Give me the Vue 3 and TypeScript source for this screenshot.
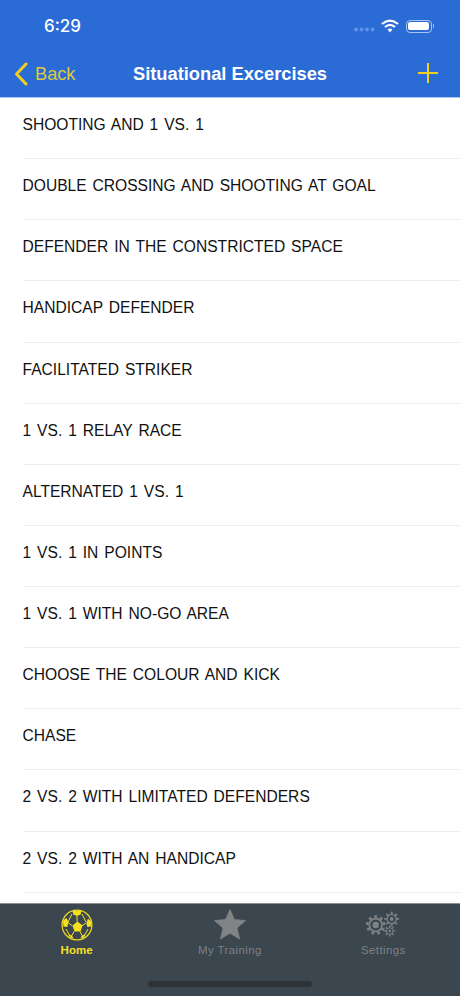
<script setup lang="ts">
const exercises: string[] = [
  'SHOOTING AND 1 VS. 1',
  'DOUBLE CROSSING AND SHOOTING AT GOAL',
  'DEFENDER IN THE CONSTRICTED SPACE',
  'HANDICAP DEFENDER',
  'FACILITATED STRIKER',
  '1 VS. 1 RELAY RACE',
  'ALTERNATED 1 VS. 1',
  '1 VS. 1 IN POINTS',
  '1 VS. 1 WITH NO-GO AREA',
  'CHOOSE THE COLOUR AND KICK',
  'CHASE',
  '2 VS. 2 WITH LIMITATED DEFENDERS',
  '2 VS. 2 WITH AN HANDICAP',
]

// gear teeth, drawn as short rotated bars
const teeth = (n: number): number[] => Array.from({ length: n }, (_, i) => (360 / n) * i)
</script>

<template>
  <div class="screen">
    <header class="header">
      <div class="status">
        <span class="time">6:29</span>
        <div class="status-icons">
          <svg class="dots" width="21" height="5" viewBox="0 0 21 5">
            <circle cx="2" cy="2.5" r="2" />
            <circle cx="7.5" cy="2.5" r="2" />
            <circle cx="13" cy="2.5" r="2" />
            <circle cx="18.5" cy="2.5" r="2" />
          </svg>
          <svg class="wifi" width="18" height="14" viewBox="0 0 18 14">
            <path d="M1 5 Q9 -1.8 17 5" fill="none" stroke="#fff" stroke-width="2.2" />
            <path d="M4 8 Q9 3.6 14 8" fill="none" stroke="#fff" stroke-width="2.2" />
            <path d="M6.6 10.4 Q9 8.4 11.4 10.4 L9 13.4 Z" fill="#fff" />
          </svg>
          <div class="battery">
            <div class="battery-fill"></div>
          </div>
          <div class="battery-cap"></div>
        </div>
      </div>
      <nav class="nav">
        <div class="back">
          <svg width="14" height="24" viewBox="0 0 14 24">
            <path d="M12 2 L2.5 12 L12 22" fill="none" stroke="#f2cf1d" stroke-width="3" stroke-linecap="round" stroke-linejoin="round" />
          </svg>
          <span>Back</span>
        </div>
        <span class="title">Situational Excercises</span>
        <svg class="plus" width="20" height="20" viewBox="0 0 20 20">
          <path d="M10 0 V20 M0 10 H20" stroke="#f2cf1d" stroke-width="2" />
        </svg>
      </nav>
    </header>

    <main class="list">
      <div v-for="item in exercises" :key="item" class="row">
        <span class="row-text">{{ item }}</span>
      </div>
    </main>

    <footer class="tabbar">
      <div class="tab active">
        <svg width="32" height="32" viewBox="0 0 32 32">
          <circle cx="16" cy="16" r="14.9" fill="none" stroke="#f5e020" stroke-width="1.2" />
          <path d="M16 12.5 V7 M11.5 17 L7.5 14 M20.5 17 L25 14 M13 22.5 L11 26.5 M19 22.5 L21 26.5 M11 5 L7 13 M21 5 L25 13 M5 20 L8.5 26.5 M27 20 L23.5 26.5" stroke="#f5e020" stroke-width="1" fill="none" />
          <polygon points="16.5,12.5 21.5,16.5 19.6,22.5 13.4,22.5 11.5,16.5" fill="#f5e020" />
          <polygon points="11.5,2 20.5,2 19.6,5.4 16,7 12.4,5.4" fill="#f5e020" />
          <polygon points="2,11.5 5.5,9 7.6,13.5 6.2,18 2.4,17.6" fill="#f5e020" />
          <polygon points="30,12 27,9.8 25.4,14 26.2,18 30,17.6" fill="#f5e020" />
          <polygon points="7.4,25.2 10.8,26.2 12.6,29.6 9.2,28.6" fill="#f5e020" />
          <polygon points="24.6,25.2 21.2,26.2 19.4,29.6 22.8,28.6" fill="#f5e020" />
        </svg>
        <span>Home</span>
      </div>
      <div class="tab">
        <svg width="32" height="32" viewBox="0 0 32 32">
          <polygon points="16,0.5 20.4,10.6 31.5,11.6 23,19 25.6,30 16,24.2 6.4,30 9,19 0.5,11.6 11.6,10.6" fill="#808487" stroke="#808487" stroke-width="0.8" stroke-linejoin="round" />
        </svg>
        <span>My Training</span>
      </div>
      <div class="tab">
        <svg width="34" height="32" viewBox="0 0 34 32" fill="none" stroke="#7e8386">
          <g transform="translate(9.7 16)">
            <rect v-for="a in teeth(9)" :key="a" x="-1.4" y="-9.8" width="2.8" height="2.6" fill="#7e8386" stroke="none" :transform="`rotate(${a})`" />
            <circle r="6.4" stroke-width="1.8" />
            <circle r="3.2" fill="#7e8386" stroke="none" />
          </g>
          <g transform="translate(25.7 10)">
            <rect v-for="a in teeth(8)" :key="a" x="-0.9" y="-7.4" width="1.8" height="2.2" fill="#7e8386" stroke="none" :transform="`rotate(${a})`" />
            <circle r="4.6" stroke-width="1.3" />
            <circle r="1.9" fill="#7e8386" stroke="none" />
          </g>
          <g transform="translate(23.7 22)">
            <rect v-for="a in teeth(8)" :key="a" x="-0.7" y="-5.5" width="1.4" height="1.8" fill="#7e8386" stroke="none" :transform="`rotate(${a})`" />
            <circle r="3.3" stroke-width="1" />
            <circle r="1.3" fill="#7e8386" stroke="none" />
          </g>
        </svg>
        <span>Settings</span>
      </div>
      <div class="home-indicator"></div>
    </footer>
  </div>
</template>

<style>
body {
  margin: 0;
}
</style>

<style scoped>
.screen {
  width: 460px;
  height: 996px;
  display: flex;
  flex-direction: column;
  overflow: hidden;
  background: #fff;
  font-family: "Liberation Sans", Arial, sans-serif;
}

.header {
  height: 98px;
  flex-shrink: 0;
  background: #2a6bd6;
  color: #fff;
  border-bottom: 1px solid #a9c6f0;
  box-sizing: border-box;
}

.status {
  height: 52px;
  display: flex;
  align-items: center;
  justify-content: space-between;
  padding: 0 26px 0 44px;
}

.time {
  font-size: 17px;
  font-weight: 500;
  font-family: Inter, "Liberation Sans", sans-serif;
}

.status-icons {
  display: flex;
  align-items: center;
}

.dots {
  fill: #5d92e6;
  margin: 6px 6px 0 2px;
}

.wifi {
  margin-right: 7px;
}

.battery {
  width: 26px;
  height: 13px;
  box-sizing: border-box;
  border: 1px solid #a7c3ef;
  border-radius: 4px;
  padding: 1.5px;
}

.battery-fill {
  height: 100%;
  background: #fff;
  border-radius: 2px;
}

.battery-cap {
  width: 1.5px;
  height: 4px;
  margin-left: 1px;
  background: #a7c3ef;
  border-radius: 0 1px 1px 0;
}

.nav {
  height: 42px;
  display: flex;
  align-items: center;
  justify-content: space-between;
  padding: 0 22px 0 14px;
  position: relative;
}

.back {
  display: flex;
  align-items: center;
  gap: 7px;
  color: #dfc93a;
  font-size: 18.2px;
  padding-top: 2px;
}

.title {
  position: absolute;
  left: 0;
  right: 0;
  top: 11px;
  text-align: center;
  font-size: 18.3px;
  font-weight: 700;
}

.list {
  flex: 1;
  min-height: 0;
  overflow: hidden;
}

.row {
  height: 61.14px;
  box-sizing: border-box;
  margin-left: 23px;
  padding-top: 18px;
  border-bottom: 1px solid #ececec;
}

.row-text {
  font-size: 15.6px;
  line-height: 18px;
  display: block;
  margin-left: -0.5px;
  word-spacing: 1.6px;
  color: #111;
}

.tabbar {
  height: 93px;
  flex-shrink: 0;
  background: #3b464e;
  border-top: 1px solid #8a8f92;
  box-sizing: border-box;
  display: grid;
  grid-template-columns: repeat(3, 1fr);
  position: relative;
}

.tab {
  display: flex;
  flex-direction: column;
  align-items: center;
  height: 60px;
  padding-top: 5px;
  box-sizing: border-box;
  color: #7c8184;
  font-size: 11.5px;
  font-weight: 500;
  letter-spacing: 0.4px;
}

.tab svg {
  flex-shrink: 0;
}

.tab span {
  margin-top: 3px;
}

.tab.active {
  color: #f5e020;
  font-weight: 700;
  letter-spacing: 0.1px;
}

.home-indicator {
  position: absolute;
  left: 148px;
  bottom: 9px;
  width: 164px;
  height: 6px;
  border-radius: 3px;
  background: #2f3235;
}
</style>
